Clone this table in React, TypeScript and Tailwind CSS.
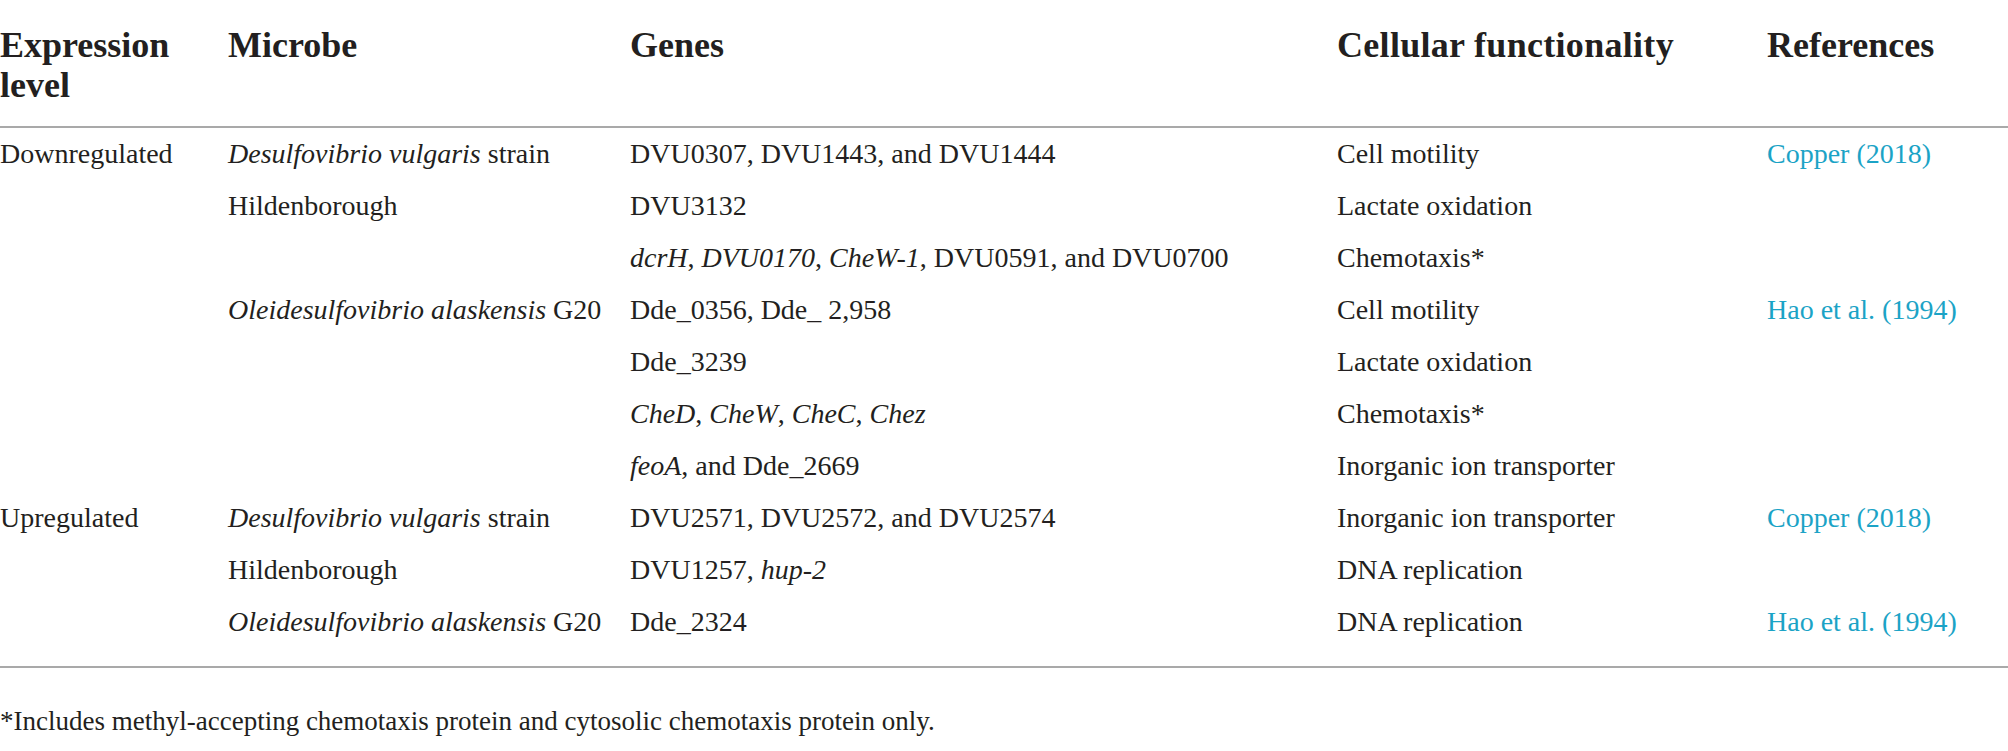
import React from 'react'

type Row = {
  level?: string
  microbe?: React.ReactNode
  genes: React.ReactNode
  func: string
  refText?: string
}

const rows: Row[] = [
  {
    level: 'Downregulated',
    microbe: (
      <>
        <i>Desulfovibrio vulgaris</i> strain
      </>
    ),
    genes: 'DVU0307, DVU1443, and DVU1444',
    func: 'Cell motility',
    refText: 'Copper (2018)',
  },
  { microbe: 'Hildenborough', genes: 'DVU3132', func: 'Lactate oxidation' },
  {
    genes: (
      <>
        <i>dcrH</i>, <i>DVU0170</i>, <i>CheW-1</i>, DVU0591, and DVU0700
      </>
    ),
    func: 'Chemotaxis*',
  },
  {
    microbe: (
      <>
        <i>Oleidesulfovibrio alaskensis</i> G20
      </>
    ),
    genes: 'Dde_0356, Dde_ 2,958',
    func: 'Cell motility',
    refText: 'Hao et al. (1994)',
  },
  { genes: 'Dde_3239', func: 'Lactate oxidation' },
  {
    genes: (
      <>
        <i>CheD</i>, <i>CheW</i>, <i>CheC</i>, <i>Chez</i>
      </>
    ),
    func: 'Chemotaxis*',
  },
  {
    genes: (
      <>
        <i>feoA</i>, and Dde_2669
      </>
    ),
    func: 'Inorganic ion transporter',
  },
  {
    level: 'Upregulated',
    microbe: (
      <>
        <i>Desulfovibrio vulgaris</i> strain
      </>
    ),
    genes: 'DVU2571, DVU2572, and DVU2574',
    func: 'Inorganic ion transporter',
    refText: 'Copper (2018)',
  },
  {
    microbe: 'Hildenborough',
    genes: (
      <>
        DVU1257, <i>hup-2</i>
      </>
    ),
    func: 'DNA replication',
  },
  {
    microbe: (
      <>
        <i>Oleidesulfovibrio alaskensis</i> G20
      </>
    ),
    genes: 'Dde_2324',
    func: 'DNA replication',
    refText: 'Hao et al. (1994)',
  },
]

const cols = 'grid grid-cols-[228px_402px_707px_430px_1fr]'

export default function App() {
  return (
    <div className="w-[2008px] h-[751px] bg-white text-[#231f20] font-['Liberation_Serif','Times_New_Roman',serif] overflow-hidden">
      {/* Header */}
      <div className={`${cols} pt-[25px] pb-[21px] border-b-2 border-[#a9a9a9] text-[36px] leading-[40px] font-bold`}>
        <div>
          Expression
          <br />
          level
        </div>
        <div>Microbe</div>
        <div>Genes</div>
        <div className="tracking-[0.3px]">Cellular functionality</div>
        <div>References</div>
      </div>

      {/* Body */}
      <div className="pb-[18px] border-b-2 border-[#a9a9a9] text-[28px] leading-[52px]">
        {rows.map((r, i) => (
          <div key={i} className={cols}>
            <div>{r.level}</div>
            <div className="whitespace-nowrap">{r.microbe}</div>
            <div className="whitespace-nowrap">{r.genes}</div>
            <div className="whitespace-nowrap">{r.func}</div>
            <div className="whitespace-nowrap text-[#1ba3c6]">{r.refText}</div>
          </div>
        ))}
      </div>

      {/* Footnote */}
      <p className="mt-[38px] text-[27px] leading-[30px]">
        *Includes methyl-accepting chemotaxis protein and cytosolic chemotaxis protein only.
      </p>
    </div>
  )
}
